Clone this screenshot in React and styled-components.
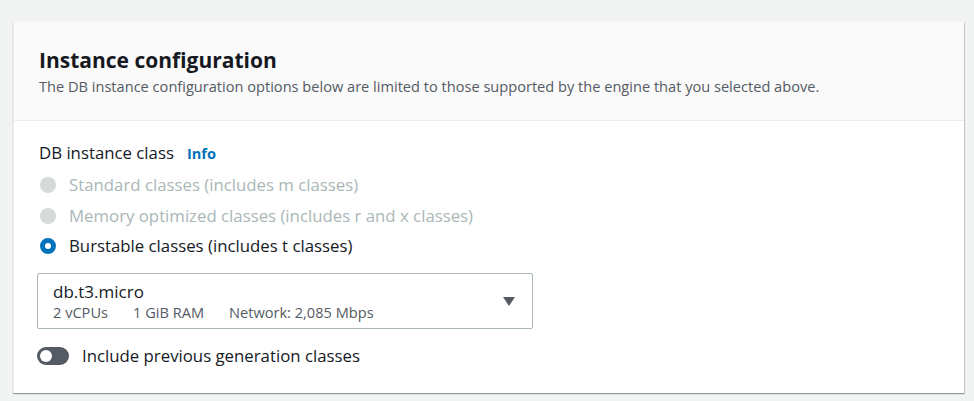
import styled, { createGlobalStyle } from 'styled-components';

const GlobalStyle = createGlobalStyle`
	body {
		margin: 0;
		background: #f2f3f3;
		font-family: 'Open Sans', 'Noto Sans', sans-serif;
		color: #16191f;
	}
`;

const Page = styled.div`
	padding: 22px 10px 8px 13px;
`;

const Card = styled.section`
	background: #ffffff;
	height: 371px;
	box-sizing: border-box;
	border-left: 1px solid #eaeded;
	box-shadow: 0 1px 1px 0 rgba(0, 28, 36, 0.3), 1px 1px 1px 0 rgba(0, 28, 36, 0.15);
`;

const Header = styled.header`
	background: #fafafa;
	border-bottom: 1px solid #eaeded;
	height: 99px;
	box-sizing: border-box;
	padding: 23px 25px 0;
`;

const Title = styled.h2`
	margin: 0;
	font-size: 21px;
	font-weight: 700;
	line-height: 30px;
`;

const Description = styled.p`
	margin: 1px 0 0;
	font-size: 14.6px;
	line-height: 20px;
	color: #545b64;
`;

const Body = styled.div`
	padding: 20px 25px;
`;

const FieldLabel = styled.div`
	display: flex;
	align-items: baseline;
	gap: 13px;
	font-size: 16.8px;
	line-height: 24px;
`;

const InfoLink = styled.a`
	color: #0073bb;
	font-size: 14.6px;
	font-weight: 700;
	text-decoration: none;
`;

const RadioGroup = styled.div`
	display: flex;
	flex-direction: column;
	gap: 6.5px;
	margin-top: 8px;
`;

const RadioRow = styled.label`
	display: flex;
	align-items: center;
	gap: 13px;
	font-size: 16.8px;
	line-height: 24px;
	color: ${(p) => (p.disabled ? '#aab7b8' : '#16191f')};
`;

const RadioDot = styled.span`
	flex: none;
	width: 16px;
	height: 16px;
	border-radius: 50%;
	box-sizing: border-box;
	margin-left: 1px;
	background: ${(p) => (p.checked ? '#ffffff' : '#d5dbdb')};
	border: ${(p) => (p.checked ? '5px solid #0073bb' : 'none')};
`;

const Select = styled.div`
	display: flex;
	align-items: center;
	justify-content: space-between;
	width: 496px;
	height: 56px;
	box-sizing: border-box;
	margin: 15px 0 0 -2px;
	padding: 0 17px 0 15px;
	border: 1px solid #aab7b8;
	border-radius: 2px;
`;

const SelectValue = styled.div`
	font-size: 17px;
	line-height: 22px;
`;

const SelectMeta = styled.div`
	display: flex;
	gap: 25px;
	font-size: 14.6px;
	line-height: 19px;
	color: #545b64;
`;

const Caret = styled.span`
	width: 0;
	height: 0;
	border-left: 6px solid transparent;
	border-right: 6px solid transparent;
	border-top: 9px solid #545b64;
`;

const ToggleRow = styled.label`
	display: flex;
	align-items: center;
	gap: 13px;
	margin: 15px 0 0 -2px;
	font-size: 16.8px;
	line-height: 24px;
`;

const Toggle = styled.span`
	display: flex;
	align-items: center;
	width: 32px;
	height: 18px;
	border-radius: 9px;
	background: #545b64;
	padding: 0 3px;
	box-sizing: border-box;

	&::before {
		content: '';
		width: 12px;
		height: 12px;
		border-radius: 50%;
		background: #ffffff;
	}
`;

const options = [
	{ label: 'Standard classes (includes m classes)', disabled: true },
	{ label: 'Memory optimized classes (includes r and x classes)', disabled: true },
	{ label: 'Burstable classes (includes t classes)', checked: true },
];

export default function App() {
	return (
		<>
			<GlobalStyle />
			<Page>
				<Card>
					<Header>
						<Title>Instance configuration</Title>
						<Description>
							The DB instance configuration options below are limited to those supported by the engine that you selected above.
						</Description>
					</Header>
					<Body>
						<FieldLabel>
							DB instance class <InfoLink href="#">Info</InfoLink>
						</FieldLabel>
						<RadioGroup>
							{options.map((o) => (
								<RadioRow key={o.label} disabled={o.disabled}>
									<RadioDot checked={o.checked} />
									{o.label}
								</RadioRow>
							))}
						</RadioGroup>
						<Select>
							<div>
								<SelectValue>db.t3.micro</SelectValue>
								<SelectMeta>
									<span>2 vCPUs</span>
									<span>1 GiB RAM</span>
									<span>Network: 2,085 Mbps</span>
								</SelectMeta>
							</div>
							<Caret />
						</Select>
						<ToggleRow>
							<Toggle />
							Include previous generation classes
						</ToggleRow>
					</Body>
				</Card>
			</Page>
		</>
	);
}
